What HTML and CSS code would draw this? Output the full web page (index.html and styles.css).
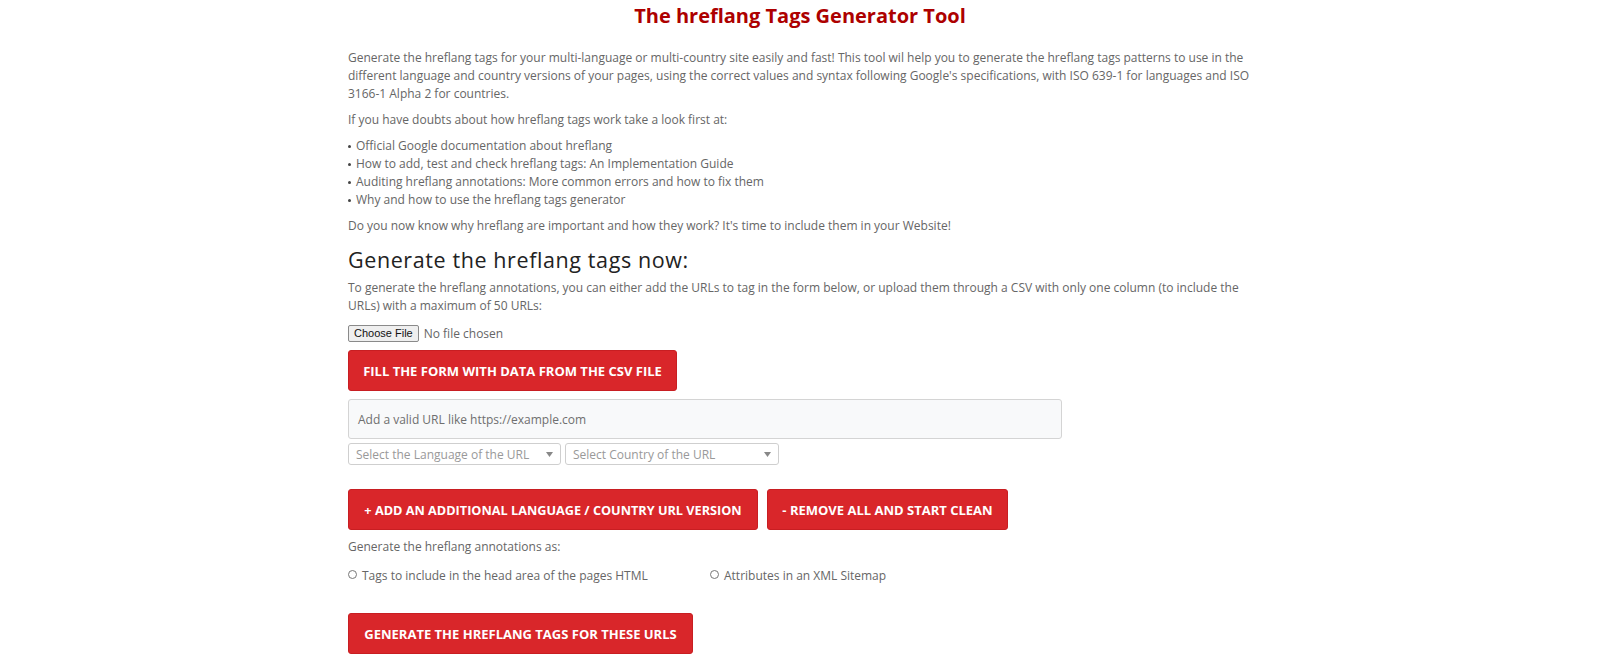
FILE: index.html
```html
<!DOCTYPE html>
<html lang="en">
<head>
<meta charset="utf-8">
<title>The hreflang Tags Generator Tool</title>
<link rel="stylesheet" href="styles.css">
</head>
<body>
<main class="page">
  <h1 class="title">The hreflang Tags Generator Tool</h1>
  <p class="text">Generate the hreflang tags for your multi-language or multi-country site easily and fast! This tool wil help you to generate the hreflang tags patterns to use in the different language and country versions of your pages, using the correct values and syntax following Google's specifications, with ISO 639-1 for languages and ISO 3166-1 Alpha 2 for countries.</p>
  <p class="text">If you have doubts about how hreflang tags work take a look first at:</p>
  <ul class="links">
    <li>Official Google documentation about hreflang</li>
    <li>How to add, test and check hreflang tags: An Implementation Guide</li>
    <li>Auditing hreflang annotations: More common errors and how to fix them</li>
    <li>Why and how to use the hreflang tags generator</li>
  </ul>
  <p class="text">Do you now know why hreflang are important and how they work? It's time to include them in your Website!</p>

  <h2 class="subtitle">Generate the hreflang tags now:</h2>
  <p class="text">To generate the hreflang annotations, you can either add the URLs to tag in the form below, or upload them through a CSV with only one column (to include the URLs) with a maximum of 50 URLs:</p>

  <div class="file-row">
    <span class="file-btn">Choose File</span>
    <span class="file-name">No file chosen</span>
  </div>

  <button class="btn btn-fill">FILL THE FORM WITH DATA FROM THE CSV FILE</button>

  <div class="url-input">Add a valid URL like https://example.com</div>

  <div class="select-row">
    <div class="select"><span>Select the Language of the URL</span><svg class="caret" width="7" height="5" viewBox="0 0 7 5"><path d="M0 0h7L3.5 5z" fill="#888"/></svg></div>
    <div class="select"><span>Select Country of the URL</span><svg class="caret" width="7" height="5" viewBox="0 0 7 5"><path d="M0 0h7L3.5 5z" fill="#888"/></svg></div>
  </div>

  <div class="btn-row">
    <button class="btn btn-add">+ ADD AN ADDITIONAL LANGUAGE / COUNTRY URL VERSION</button>
    <button class="btn btn-remove">- REMOVE ALL AND START CLEAN</button>
  </div>

  <p class="text as-label">Generate the hreflang annotations as:</p>

  <div class="radio-row">
    <label class="radio"><span class="dot"></span>Tags to include in the head area of the pages HTML</label>
    <label class="radio"><span class="dot"></span>Attributes in an XML Sitemap</label>
  </div>

  <button class="btn btn-generate">GENERATE THE HREFLANG TAGS FOR THESE URLS</button>
</main>
</body>
</html>
```

FILE: styles.css
```css
* { box-sizing: border-box; }
html, body { margin: 0; padding: 0; background: #fff; }
body {
  font-family: "Open Sans", "Liberation Sans", sans-serif;
  color: #666;
}
.page {
  width: 904px;
  margin: 0 auto;
  display: flex;
  flex-direction: column;
  align-items: flex-start;
}
.title {
  align-self: center;
  margin: 4px 0 0;
  font-size: 20px;
  line-height: 24px;
  font-weight: 700;
  color: #ad0000;
}
.text {
  margin: 0;
  font-size: 12px;
  line-height: 18px;
  color: #666;
}
.title + .text { margin-top: 21px; }
.text + .text, .links + .text { margin-top: 7.5px; }
.links {
  list-style: none;
  margin: 8.5px 0 0;
  padding: 0;
  font-size: 12px;
  line-height: 18px;
  color: #666;
}
.links li { display: flex; align-items: center; }
.links li::before {
  content: "";
  width: 3px; height: 3px;
  border-radius: 50%;
  background: #444;
  margin-right: 5px;
}
.subtitle {
  margin: 13.5px 0 0;
  font-size: 21.5px;
  letter-spacing: 0.6px;
  line-height: 24px;
  font-weight: 400;
  color: #222;
}
.subtitle + .text { margin-top: 7px; }
.file-row {
  margin-top: 9px;
  display: flex;
  align-items: center;
  gap: 5px;
  height: 18px;
}
.file-btn {
  font-family: "Liberation Sans", sans-serif;
  font-size: 11px;
  line-height: 15px;
  padding: 0 5px;
  color: #111;
  background: #efefef;
  border: 1px solid #8a8a8a;
  border-radius: 2px;
}
.file-name { font-size: 12px; color: #666; }
.btn {
  font-family: "Open Sans", "Liberation Sans", sans-serif;
  font-weight: 700;
  font-size: 13px;
  white-space: nowrap;
  color: #fff;
  background: #d9262a;
  border: 1px solid #c81e22;
  border-radius: 3px;
  height: 41px;
  padding: 0;
  cursor: pointer;
}
.btn-fill { margin-top: 8px; width: 329px; }
.url-input {
  margin-top: 8px;
  width: 714px;
  height: 40px;
  display: flex;
  align-items: center;
  padding: 0 9px;
  background: #f8f9fa;
  border: 1px solid #d4d4d4;
  border-radius: 3px;
  font-size: 12px;
  color: #6f6f6f;
}
.select-row { margin-top: 4px; display: flex; gap: 4px; }
.select {
  width: 213px;
  height: 22px;
  display: flex;
  align-items: center;
  justify-content: space-between;
  padding: 0 7px;
  border: 1px solid #cfcfcf;
  border-radius: 3px;
  background: #fff;
  font-size: 12px;
  color: #999;
}
.select + .select { width: 214px; }
.btn-row { margin-top: 24px; display: flex; gap: 9px; }
.btn-add { width: 410px; font-size: 12.7px; }
.btn-remove { width: 241px; }
.text.as-label { margin-top: 8px; }
.radio-row { margin-top: 11px; display: flex; }
.radio {
  display: flex;
  align-items: center;
  font-size: 12px;
  line-height: 18px;
  color: #666;
}
.radio:first-child { width: 362px; }
.dot {
  width: 9px; height: 9px;
  border: 1px solid #777;
  border-radius: 50%;
  margin-right: 5px;
  margin-top: -3px;
}
.btn-generate { margin-top: 28px; width: 345px; }
```
